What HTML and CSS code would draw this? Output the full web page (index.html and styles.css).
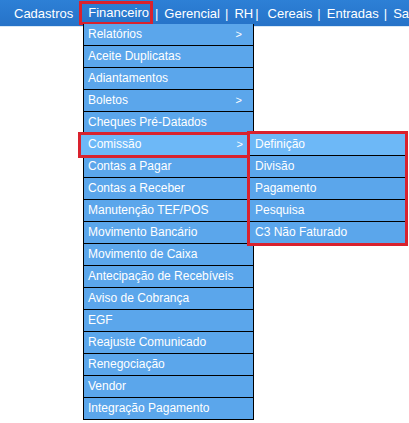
FILE: index.html
```html
<!DOCTYPE html>
<html>
<head>
<meta charset="utf-8">
<link rel="stylesheet" href="styles.css">
</head>
<body>
<div class="topbar">
  <span class="nav">Cadastros</span>
  <span class="nav active">Financeiro</span>
  <span class="sep first">|</span>
  <span class="nav">Gerencial</span>
  <span class="sep">|</span>
  <span class="nav">RH</span>
  <span class="sep wide">|</span>
  <span class="nav">Cereais</span>
  <span class="sep">|</span>
  <span class="nav">Entradas</span>
  <span class="sep">|</span>
  <span class="nav">Saídas</span>
</div>
<ul class="menu">
  <li class="item">Relatórios<span class="arrow">&gt;</span></li>
  <li class="item">Aceite Duplicatas</li>
  <li class="item">Adiantamentos</li>
  <li class="item">Boletos<span class="arrow">&gt;</span></li>
  <li class="item">Cheques Pré-Datados</li>
  <li class="item hover">Comissão<span class="arrow">&gt;</span>
    <ul class="submenu">
      <li class="item hover">Definição</li>
      <li class="item">Divisão</li>
      <li class="item">Pagamento</li>
      <li class="item">Pesquisa</li>
      <li class="item">C3 Não Faturado</li>
    </ul>
  </li>
  <li class="item">Contas a Pagar</li>
  <li class="item">Contas a Receber</li>
  <li class="item">Manutenção TEF/POS</li>
  <li class="item">Movimento Bancário</li>
  <li class="item">Movimento de Caixa</li>
  <li class="item">Antecipação de Recebíveis</li>
  <li class="item">Aviso de Cobrança</li>
  <li class="item">EGF</li>
  <li class="item">Reajuste Comunicado</li>
  <li class="item">Renegociação</li>
  <li class="item">Vendor</li>
  <li class="item">Integração Pagamento</li>
</ul>
</body>
</html>
```
FILE: styles.css
```css
html, body {
  margin: 0;
  padding: 0;
  background: #fff;
  font-family: "Liberation Sans", Arial, sans-serif;
  overflow: hidden;
}
.topbar {
  height: 26px;
  background: linear-gradient(#2d80d6, #2673c8);
  border-bottom: 1px solid #d8e8f6;
  display: flex;
  align-items: center;
  padding-left: 14px;
  color: #fff;
  font-size: 13px;
  white-space: nowrap;
  overflow: hidden;
}
.nav {
  flex: none;
}
.nav.active {
  margin-left: 6px;
  padding: 2px 1px 2px 6px;
  border: 3px solid #d9222e;
  line-height: 14px;
}
.sep {
  flex: none;
  margin: 0 6px 0 5px;
}
.sep.first {
  margin-left: 2px;
}
.sep.wide {
  margin-left: 2px;
  margin-right: 9px;
}
.menu {
  position: absolute;
  left: 83px;
  top: 24px;
  width: 169px;
  margin: 0;
  padding: 0;
  list-style: none;
  border-left: 1px solid #000;
  border-right: 1px solid #000;
}
.item {
  position: relative;
  height: 21px;
  line-height: 21px;
  border-bottom: 1px solid #000;
  background: #5ba6eb;
  color: #fff;
  font-size: 12px;
  padding-left: 4px;
  white-space: nowrap;
}
.item.hover {
  background: #6db8f7;
}
.menu > .item.hover {
  outline: 3px solid #d9222e;
  outline-offset: -1px;
  margin-left: -4px;
  padding-left: 8px;
  margin-right: -1px;
  padding-right: 1px;
  z-index: 2;
}
.arrow {
  position: absolute;
  right: 11px;
  top: 0;
  font-size: 11px;
}
.submenu {
  position: absolute;
  left: 170px;
  top: 0;
  width: 155px;
  margin: 0;
  padding: 0;
  list-style: none;
  outline: 3px solid #d9222e;
  outline-offset: 0;
}
.submenu .item {
  padding-left: 5px;
}
.submenu .item:last-child {
  border-bottom: none;
}
```
